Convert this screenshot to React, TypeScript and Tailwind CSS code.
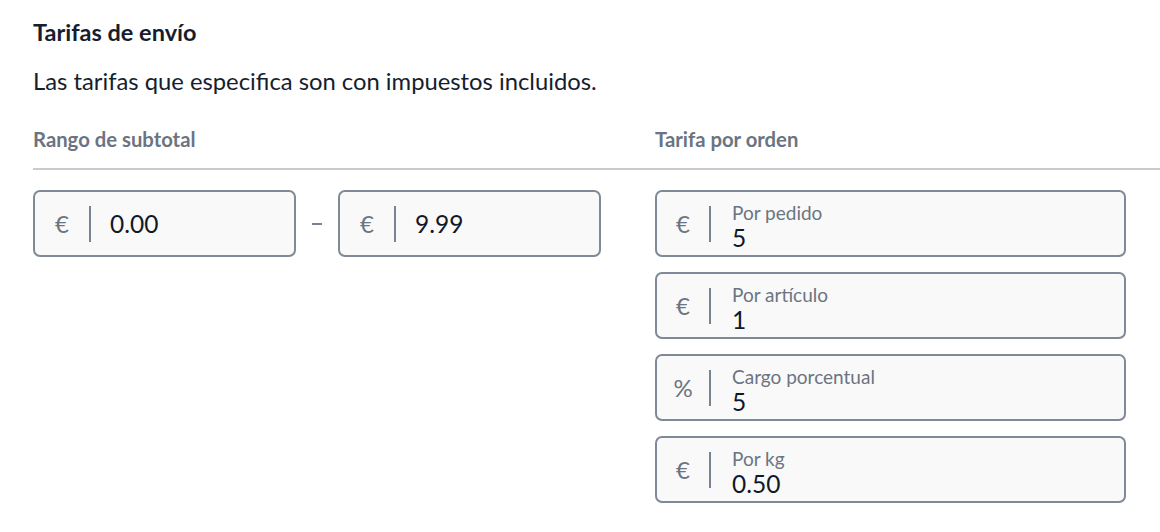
import React from "react";

const font = { fontFamily: "Lato, 'Noto Sans', sans-serif" };

function SimpleBox({ prefix, value }: { prefix: string; value: string }) {
  return (
    <div className="flex h-[67px] w-[263px] items-center rounded-[7px] border-2 border-[#7f8997] bg-[#f9f9f9]">
      <span className="w-[54px] text-center text-[24px] leading-[28px] text-[#6b7481]">{prefix}</span>
      <span className="h-[36px] w-[2px] bg-[#7a8390]" />
      <span className="ml-[19px] text-[24.5px] leading-[28px] text-[#111827]">{value}</span>
    </div>
  );
}

function LabeledBox({ prefix, label, value }: { prefix: string; label: string; value: string }) {
  return (
    <div className="flex h-[67px] w-[471px] items-center rounded-[7px] border-2 border-[#7f8997] bg-[#f9f9f9]">
      <span className="w-[52px] text-center text-[24px] leading-[28px] text-[#6b7481]">{prefix}</span>
      <span className="h-[36px] w-[2px] bg-[#7a8390]" />
      <div className="ml-[21px] mt-[6px] flex flex-col">
        <span className="text-[19px] leading-[22px] text-[#6b7481]">{label}</span>
        <span className="text-[24.5px] leading-[28px] text-[#111827]">{value}</span>
      </div>
    </div>
  );
}

export default function App() {
  return (
    <div className="h-[532px] w-[1160px] overflow-hidden bg-white" style={font}>
      <div className="pl-[33px]">
        <div className="pt-[18px] text-[23.5px] font-bold leading-[28px] text-[#161e2e]">Tarifas de envío</div>
        <div className="mt-[21px] text-[23.8px] leading-[28px] text-[#161e2e]">
          Las tarifas que especifica son con impuestos incluidos.
        </div>
        <div className="mt-[31px] flex text-[20.3px] font-bold leading-[26px] text-[#6b7481]">
          <div className="w-[622px]">Rango de subtotal</div>
          <div>Tarifa por orden</div>
        </div>
        <div className="mt-[16px] h-[2px] bg-[#c9cbcf]" />
        <div className="mt-[20px] flex">
          <div className="flex w-[622px] items-start">
            <SimpleBox prefix="€" value="0.00" />
            <div className="flex h-[67px] w-[42px] items-center justify-center">
              <span className="h-[2px] w-[10px] bg-[#7a8390]" />
            </div>
            <div className="w-[262px]">
              <SimpleBox prefix="€" value="9.99" />
            </div>
          </div>
          <div className="flex flex-col gap-[15px]">
            <LabeledBox prefix="€" label="Por pedido" value="5" />
            <LabeledBox prefix="€" label="Por artículo" value="1" />
            <LabeledBox prefix="%" label="Cargo porcentual" value="5" />
            <LabeledBox prefix="€" label="Por kg" value="0.50" />
          </div>
        </div>
      </div>
    </div>
  );
}
